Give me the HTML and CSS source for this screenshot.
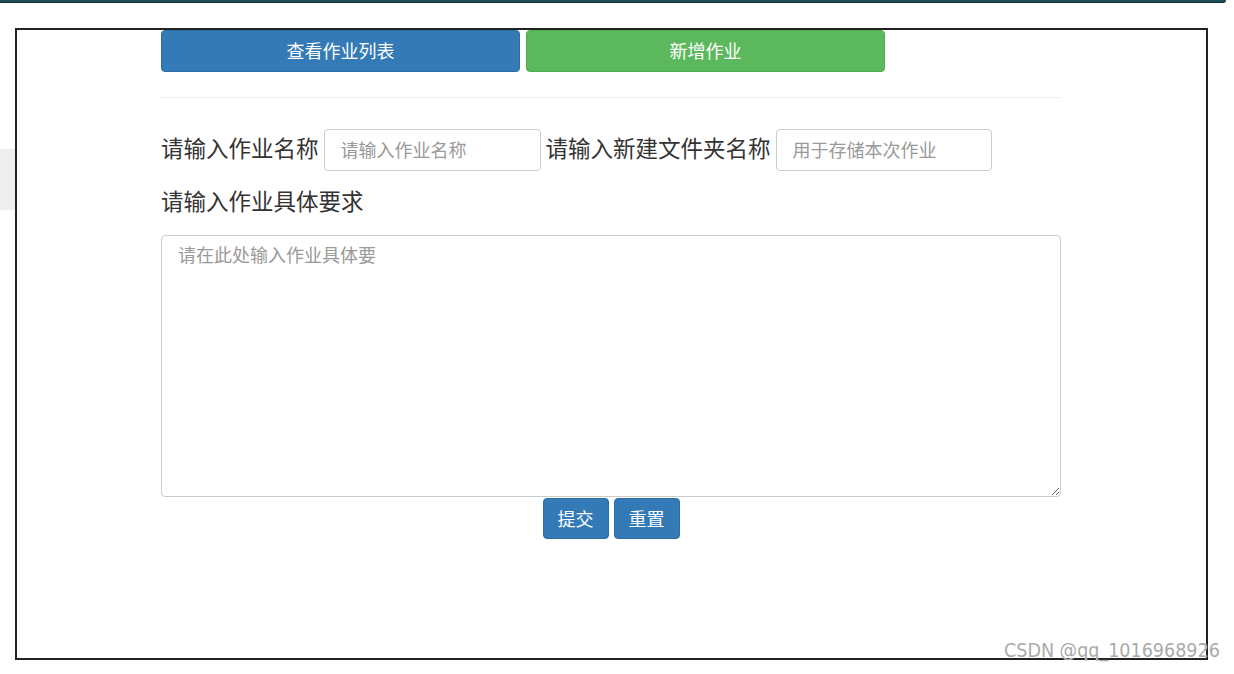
FILE: index.html
```html
<!DOCTYPE html>
<html lang="zh">
<head>
<meta charset="utf-8">
<title>新增作业</title>
<link rel="stylesheet" href="styles.css">
</head>
<body>
<div class="topbar"></div>
<div class="page">
  <div class="side"><div class="side-block"></div></div>
  <div class="frame">
    <div class="content">
      <div class="tabs">
        <button class="btn btn-primary tab">查看作业列表</button>
        <button class="btn btn-success tab">新增作业</button>
      </div>
      <hr class="divider">
      <div class="row">
        <label class="label">请输入作业名称</label>
        <input class="field field-name" type="text" placeholder="请输入作业名称">
        <label class="label">请输入新建文件夹名称</label>
        <input class="field field-folder" type="text" placeholder="用于存储本次作业">
      </div>
      <div class="label label-block">请输入作业具体要求</div>
      <textarea class="area" placeholder="请在此处输入作业具体要"></textarea>
      <div class="actions">
        <button class="btn btn-primary small">提交</button>
        <button class="btn btn-primary small">重置</button>
      </div>
    </div>
  </div>
</div>
<div class="watermark">CSDN @qq_1016968926</div>
</body>
</html>
```

FILE: styles.css
```css
html, body {
  margin: 0;
  padding: 0;
  background: #ffffff;
  font-family: "Noto Sans CJK SC", "Noto Sans", sans-serif;
  color: #333333;
}

.topbar {
  width: 1226px;
  height: 2px;
  background: #1f4d57;
  border-bottom: 1px solid #0f2a30;
  border-bottom-right-radius: 3px;
}

.page {
  display: flex;
  margin-top: 25px;
}

.side {
  width: 15px;
  flex: none;
}

.side-block {
  margin-top: 121px;
  height: 61px;
  background: #eeeeee;
}

.frame {
  width: 1189px;
  height: 628px;
  border: 2px solid #222222;
  flex: none;
}

.content {
  width: 900px;
  margin-left: 144px;
  display: flex;
  flex-direction: column;
}

.tabs {
  display: flex;
  gap: 6px;
}

.btn {
  font-family: "Noto Sans CJK SC", "Noto Sans", sans-serif;
  color: #ffffff;
  border: 1px solid transparent;
  border-radius: 4px;
  cursor: pointer;
  padding: 0;
}

.btn-primary {
  background: #337ab7;
  border-color: #2e6da4;
}

.btn-success {
  background: #5cb85c;
  border-color: #4cae4c;
}

.tab {
  width: 359px;
  height: 42px;
  font-size: 18px;
  padding-bottom: 2px;
}

.divider {
  margin: 25px 0 0 0;
  border: 0;
  border-top: 1px solid #eeeeee;
  height: 0;
}

.row {
  display: flex;
  align-items: center;
  gap: 5px;
  margin-top: 31px;
}

.label {
  font-size: 22.5px;
  line-height: 30px;
  color: #333333;
  white-space: nowrap;
}

.row .label {
  padding-bottom: 7px;
}

.field {
  height: 42px;
  box-sizing: border-box;
  border: 1px solid #cccccc;
  border-radius: 4px;
  padding: 0 16px 2px 16px;
  font-size: 18px;
  font-family: "Noto Sans CJK SC", "Noto Sans", sans-serif;
  color: #555555;
  outline: none;
}

.field::placeholder, .area::placeholder {
  color: #999999;
}

.field-name {
  width: 217px;
}

.field-folder {
  width: 216px;
}

.label-block {
  margin-top: 14px;
}

.area {
  margin-top: 20px;
  width: 900px;
  height: 262px;
  box-sizing: border-box;
  border: 1px solid #cccccc;
  border-radius: 4px;
  padding: 5px 16px;
  font-size: 18px;
  line-height: 26px;
  font-family: "Noto Sans CJK SC", "Noto Sans", sans-serif;
  display: block;
  outline: none;
}

.actions {
  display: flex;
  justify-content: center;
  gap: 5px;
  margin-top: 1px;
}

.small {
  width: 66px;
  height: 41px;
  font-size: 18px;
  padding-bottom: 2px;
}

.watermark {
  position: absolute;
  left: 1004px;
  top: 639px;
  font-family: "DejaVu Sans Condensed", "DejaVu Sans", sans-serif;
  font-size: 19.5px;
  color: #aaaaaa;
  text-shadow: 0 0 1px #ffffff;
  white-space: nowrap;
}
```
